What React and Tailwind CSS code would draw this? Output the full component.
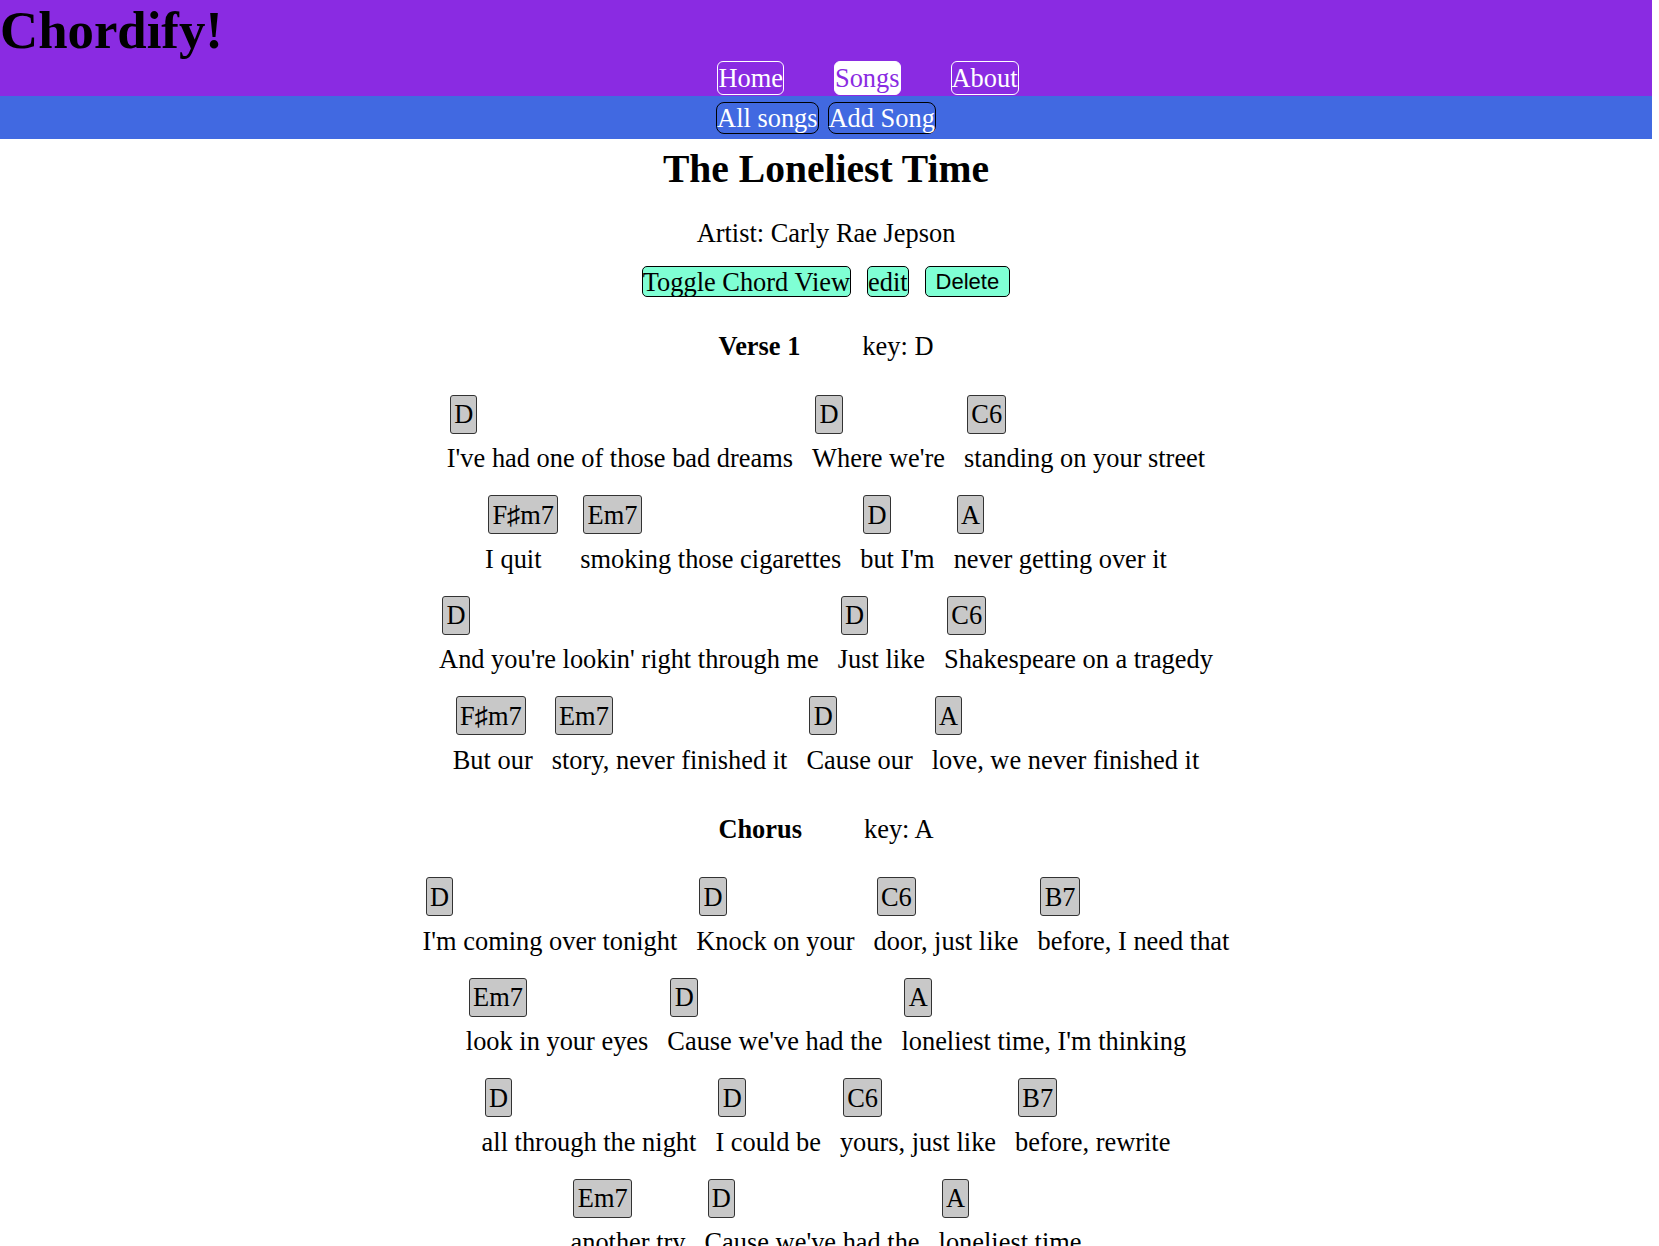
import React from 'react'

// one entry per line: [chord, lyric] segments
const SECTIONS = [
  {
    name: 'Verse 1',
    key: 'D',
    lines: [
      [['D', "I've had one of those bad dreams"], ['D', "Where we're"], ['C6', 'standing on your street']],
      [['F\u266Fm7', 'I quit'], ['Em7', 'smoking those cigarettes'], ['D', "but I'm"], ['A', 'never getting over it']],
      [['D', "And you're lookin' right through me"], ['D', 'Just like'], ['C6', 'Shakespeare on a tragedy']],
      [['F\u266Fm7', 'But our'], ['Em7', 'story, never finished it'], ['D', 'Cause our'], ['A', 'love, we never finished it']],
    ],
  },
  {
    name: 'Chorus',
    key: 'A',
    lines: [
      [['D', "I'm coming over tonight"], ['D', 'Knock on your'], ['C6', 'door, just like'], ['B7', 'before, I need that']],
      [['Em7', 'look in your eyes'], ['D', "Cause we've had the"], ['A', "loneliest time, I'm thinking"]],
      [['D', 'all through the night'], ['D', 'I could be'], ['C6', 'yours, just like'], ['B7', 'before, rewrite']],
      [['Em7', 'another try'], ['D', "Cause we've had the"], ['A', 'loneliest time']],
    ],
  },
]

function Chord({ name }) {
  return (
    <span className="mx-[3px] mb-[9.5px] rounded-[3px] border border-[#333] bg-[#c8c8c8] p-[3.3px] leading-[30.6px]">
      {name}
    </span>
  )
}

function Line({ segments }) {
  return (
    <div className="mb-[21.8px] flex justify-center gap-[19px]">
      {segments.map(([chord, lyric], i) => (
        <div key={i} className="flex flex-col items-start">
          <Chord name={chord} />
          <span className="h-[30px] leading-[30px] whitespace-pre">{lyric}</span>
        </div>
      ))}
    </div>
  )
}

export default function App() {
  return (
    <div className="w-[1652px] bg-white font-['Liberation_Serif',serif] text-[26.4px] text-black">
      <header className="bg-[#8a2be2]">
        <h1 className="m-0 h-[61px] text-[52.8px] font-bold leading-[61px]">Chordify!</h1>
        <nav className="flex h-[35px] items-start justify-center gap-[50px] pl-[84px]">
          <button className="h-[34px] rounded-[6px] border border-white leading-[30px] text-white">Home</button>
          <button className="h-[34px] rounded-[6px] border border-white bg-white leading-[30px] text-[#8a2be2]">Songs</button>
          <button className="h-[34px] rounded-[6px] border border-white leading-[30px] text-white">About</button>
        </nav>
      </header>
      <div className="flex h-[43px] items-center justify-center gap-[9px] bg-[#4169e1]">
        <button className="h-[32px] rounded-[8px] border border-black leading-[30px] text-white">All songs</button>
        <button className="h-[32px] rounded-[8px] border border-black leading-[30px] text-white">Add Song</button>
      </div>

      <main className="flex flex-col items-center">
        <h2 className="mt-[8px] text-[39.6px] font-bold leading-[45.5px]">The Loneliest Time</h2>
        <p className="mt-[25.5px] leading-[30.3px]">Artist: Carly Rae Jepson</p>
        <div className="mt-[18px] flex gap-[16px]">
          <button className="h-[31px] rounded-[5px] border border-black bg-[#7fffd4] leading-[28px]">Toggle Chord View</button>
          <button className="h-[31px] rounded-[5px] border border-black bg-[#7fffd4] leading-[28px]">edit</button>
          <button className="h-[31px] rounded-[5px] border border-black bg-[#7fffd4] px-[10px] font-['Liberation_Sans',Arial,sans-serif] text-[22px] leading-[28px]">
            Delete
          </button>
        </div>

        <div className="mt-[34px] flex w-full flex-col gap-[17px]">
          {SECTIONS.map((s) => (
            <section key={s.name}>
              <div className="flex h-[30px] justify-center gap-[62px] leading-[30px]">
                <span className="font-bold">{s.name}</span>
                <span>key: {s.key}</span>
              </div>
              <div className="mt-[33.5px]">
                {s.lines.map((l, i) => (
                  <Line key={i} segments={l} />
                ))}
              </div>
            </section>
          ))}
        </div>
      </main>
    </div>
  )
}
